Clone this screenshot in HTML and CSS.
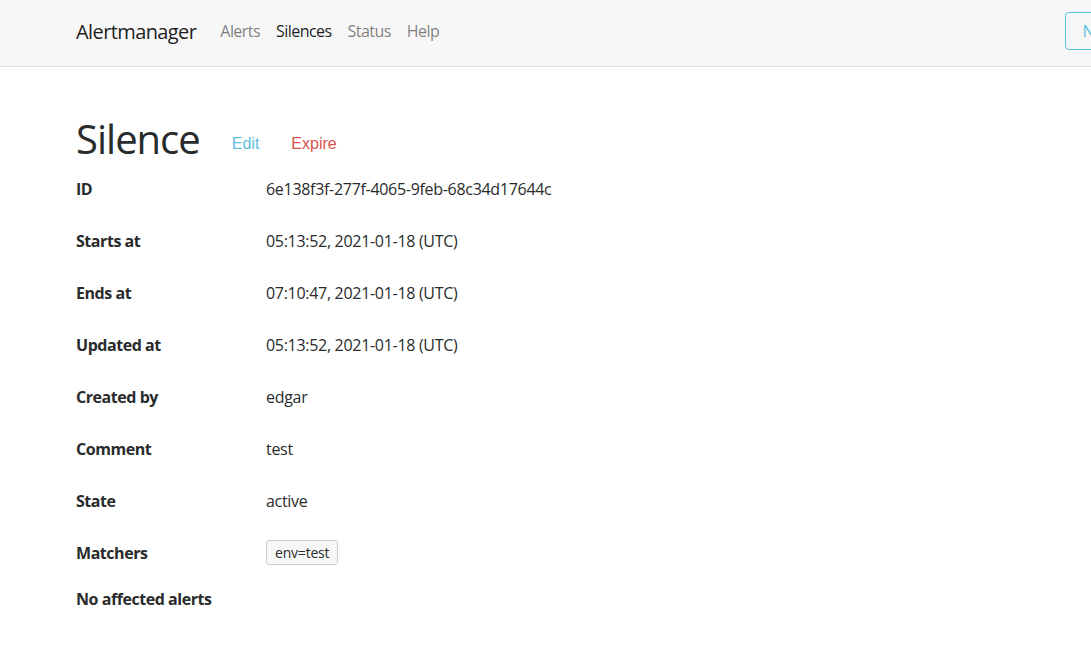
FILE: index.html
```html
<!DOCTYPE html>
<html lang="en">
<head>
<meta charset="utf-8">
<title>Alertmanager</title>
<link rel="stylesheet" href="styles.css">
</head>
<body>
<nav class="navbar">
  <div class="container nav-inner">
    <a class="brand" href="#">Alertmanager</a>
    <ul class="nav-links">
      <li><a class="nav-link" href="#">Alerts</a></li>
      <li><a class="nav-link active" href="#">Silences</a></li>
      <li><a class="nav-link" href="#">Status</a></li>
      <li><a class="nav-link" href="#">Help</a></li>
    </ul>
    <button class="btn-new">New Silence</button>
  </div>
</nav>
<main class="container content">
  <div class="title-row">
    <h1 class="title">Silence</h1>
    <button class="btn-link btn-edit">Edit</button>
    <button class="btn-link btn-expire">Expire</button>
  </div>
  <div class="field"><div class="label">ID</div><div class="value">6e138f3f-277f-4065-9feb-68c34d17644c</div></div>
  <div class="field"><div class="label">Starts at</div><div class="value">05:13:52, 2021-01-18 (UTC)</div></div>
  <div class="field"><div class="label">Ends at</div><div class="value">07:10:47, 2021-01-18 (UTC)</div></div>
  <div class="field"><div class="label">Updated at</div><div class="value">05:13:52, 2021-01-18 (UTC)</div></div>
  <div class="field"><div class="label">Created by</div><div class="value">edgar</div></div>
  <div class="field"><div class="label">Comment</div><div class="value">test</div></div>
  <div class="field"><div class="label">State</div><div class="value">active</div></div>
  <div class="field"><div class="label">Matchers</div><div class="value"><span class="matcher">env=test</span></div></div>
  <div class="field field-last"><div class="label">No affected alerts</div></div>
</main>
</body>
</html>
```
FILE: styles.css
```css
html, body {
  margin: 0;
  padding: 0;
  overflow: hidden;
  background: #fff;
}
body {
  font-family: "Open Sans", "Noto Sans", sans-serif;
  font-size: 16px;
  letter-spacing: -0.3px;
  color: #292b2c;
}
.container {
  width: 1140px;
  box-sizing: border-box;
  padding: 0 15px;
  margin-left: 61px;
}
.navbar {
  background: #f7f7f7;
  border-bottom: 1px solid #dcdcdc;
  height: 66px;
  width: 1091px;
}
.nav-inner {
  display: flex;
  align-items: center;
  height: 64px;
  padding-bottom: 2px;
}
.brand {
  font-size: 20px;
  letter-spacing: -0.6px;
  color: rgba(0,0,0,.9);
  text-decoration: none;
  margin-right: 16px;
}
.nav-links {
  display: flex;
  list-style: none;
  margin: 0;
  padding: 0;
  flex: 1;
}
.nav-link {
  display: block;
  padding: 8px;
  color: rgba(0,0,0,.5);
  text-decoration: none;
  font-size: 16px;
  letter-spacing: -0.55px;
}
.nav-link.active {
  color: rgba(0,0,0,.9);
}
.btn-new {
  font-family: "Open Sans", sans-serif;
  font-size: 16px;
  letter-spacing: -0.3px;
  color: #5bc0de;
  background: transparent;
  border: 1px solid #5bc0de;
  border-radius: 4px;
  padding: 7px 16px;
  height: 38px;
  white-space: nowrap;
}
.content {
  padding-top: 44px;
}
.title-row {
  display: flex;
  align-items: baseline;
  height: 48px;
  margin-bottom: 4px;
}
.title {
  font-size: 40px;
  font-weight: 400;
  letter-spacing: -1px;
  line-height: 48px;
  margin: 4px 16px 0 0;
  color: #292b2c;
}
.btn-link {
  font-family: "Liberation Sans", Arial, sans-serif;
  font-size: 16px;
  letter-spacing: 0;
  background: transparent;
  border: 0;
  padding: 8px 16px;
  position: relative;
  top: -5px;
}
.btn-edit { color: #5bc0de; }
.btn-expire { color: #d9534f; }
.field {
  display: flex;
  align-items: center;
  height: 52px;
}
.label {
  width: 190px;
  font-weight: 700;
  letter-spacing: -0.45px;
  flex: none;
}
.value {
  flex: 1;
}
.matcher {
  display: inline-block;
  font-size: 14px;
  letter-spacing: -0.2px;
  padding: 2px 8px;
  border: 1px solid #ccc;
  border-radius: 3px;
  background: #f7f7f7;
  margin-top: -9px;
}
.field-last {
  height: 40px;
}
```
